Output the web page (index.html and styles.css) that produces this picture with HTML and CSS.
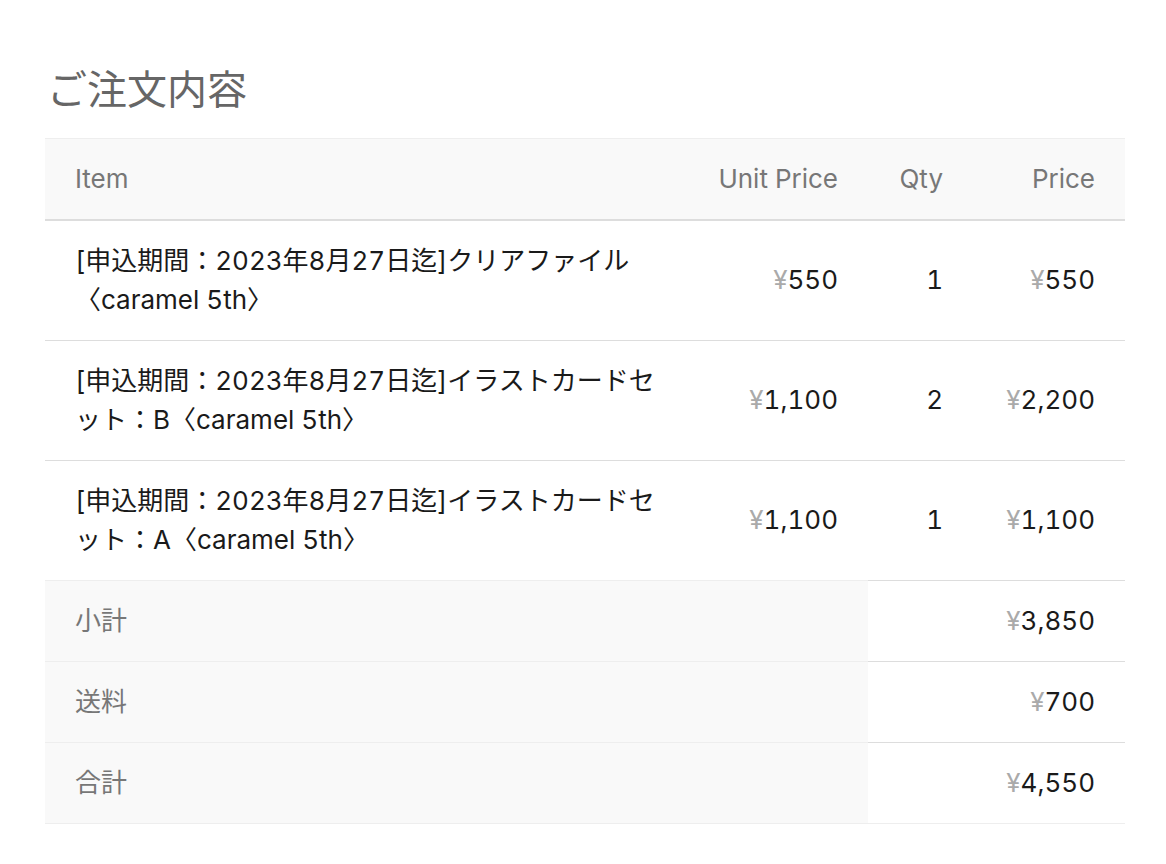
FILE: index.html
```html
<!DOCTYPE html>
<html lang="ja">
<head>
<meta charset="utf-8">
<title>ご注文内容</title>
<link rel="stylesheet" href="styles.css">
</head>
<body>
<main class="page">
  <h2 class="title">ご注文内容</h2>
  <table class="order">
    <colgroup>
      <col class="c-item">
      <col class="c-unit">
      <col class="c-qty">
      <col class="c-price">
    </colgroup>
    <thead>
      <tr>
        <th class="left">Item</th>
        <th class="right">Unit Price</th>
        <th class="right">Qty</th>
        <th class="right">Price</th>
      </tr>
    </thead>
    <tbody>
      <tr>
        <td class="left">[申込期間：2023年8月27日迄]クリアファイル〈caramel 5th〉</td>
        <td class="right"><span class="yen">¥</span>550</td>
        <td class="right">1</td>
        <td class="right"><span class="yen">¥</span>550</td>
      </tr>
      <tr>
        <td class="left">[申込期間：2023年8月27日迄]イラストカードセット：B〈caramel 5th〉</td>
        <td class="right"><span class="yen">¥</span>1,100</td>
        <td class="right">2</td>
        <td class="right"><span class="yen">¥</span>2,200</td>
      </tr>
      <tr>
        <td class="left">[申込期間：2023年8月27日迄]イラストカードセット：A〈caramel 5th〉</td>
        <td class="right"><span class="yen">¥</span>1,100</td>
        <td class="right">1</td>
        <td class="right"><span class="yen">¥</span>1,100</td>
      </tr>
    </tbody>
    <tfoot>
      <tr>
        <th class="label" colspan="2">小計</th>
        <td class="right" colspan="2"><span class="yen">¥</span>3,850</td>
      </tr>
      <tr>
        <th class="label" colspan="2">送料</th>
        <td class="right" colspan="2"><span class="yen">¥</span>700</td>
      </tr>
      <tr>
        <th class="label" colspan="2">合計</th>
        <td class="right" colspan="2"><span class="yen">¥</span>4,550</td>
      </tr>
    </tfoot>
  </table>
</main>
</body>
</html>
```

FILE: styles.css
```css
html, body {
  margin: 0;
  padding: 0;
  background: #ffffff;
}

body {
  font-family: Inter, "Noto Sans CJK JP", sans-serif;
  color: #1a1a1a;
}

.page {
  padding: 60px 41px 0 45px;
}

.title {
  margin: 0 0 24px 2px;
  font-size: 40px;
  line-height: 54px;
  font-weight: normal;
  color: #666666;
  font-family: "Noto Sans CJK JP", sans-serif;
}

.order {
  width: 1080px;
  border-collapse: collapse;
  table-layout: fixed;
  font-size: 26px;
  line-height: 39.5px;
  font-variant-numeric: tabular-nums;
}

.c-item { width: 642px; }
.c-unit { width: 181px; }
.c-qty { width: 105px; }
.c-price { width: 152px; }

.order th,
.order td {
  padding: 20px 30px;
  font-weight: normal;
  vertical-align: middle;
}

.order thead th {
  background: #f9f9f9;
  color: #777777;
  white-space: nowrap;
  border-top: 1px solid #eeeeee;
  border-bottom: 2px solid #dddddd;
}

.order tbody td {
  border-top: 1px solid #dddddd;
}

.order tbody tr:first-child td {
  border-top: none;
}

.order tfoot th,
.order tfoot td {
  border-top: 1px solid #dddddd;
  line-height: 40px;
}

.order tfoot tr:last-child th,
.order tfoot tr:last-child td {
  border-bottom: 1px solid #eeeeee;
}

.order tfoot th.label {
  background: #f9f9f9;
  color: #777777;
  text-align: left;
  border-top-color: #eeeeee;
}

.left { text-align: left; }
.right { text-align: right; }

.yen {
  color: #aaaaaa;
}
```
